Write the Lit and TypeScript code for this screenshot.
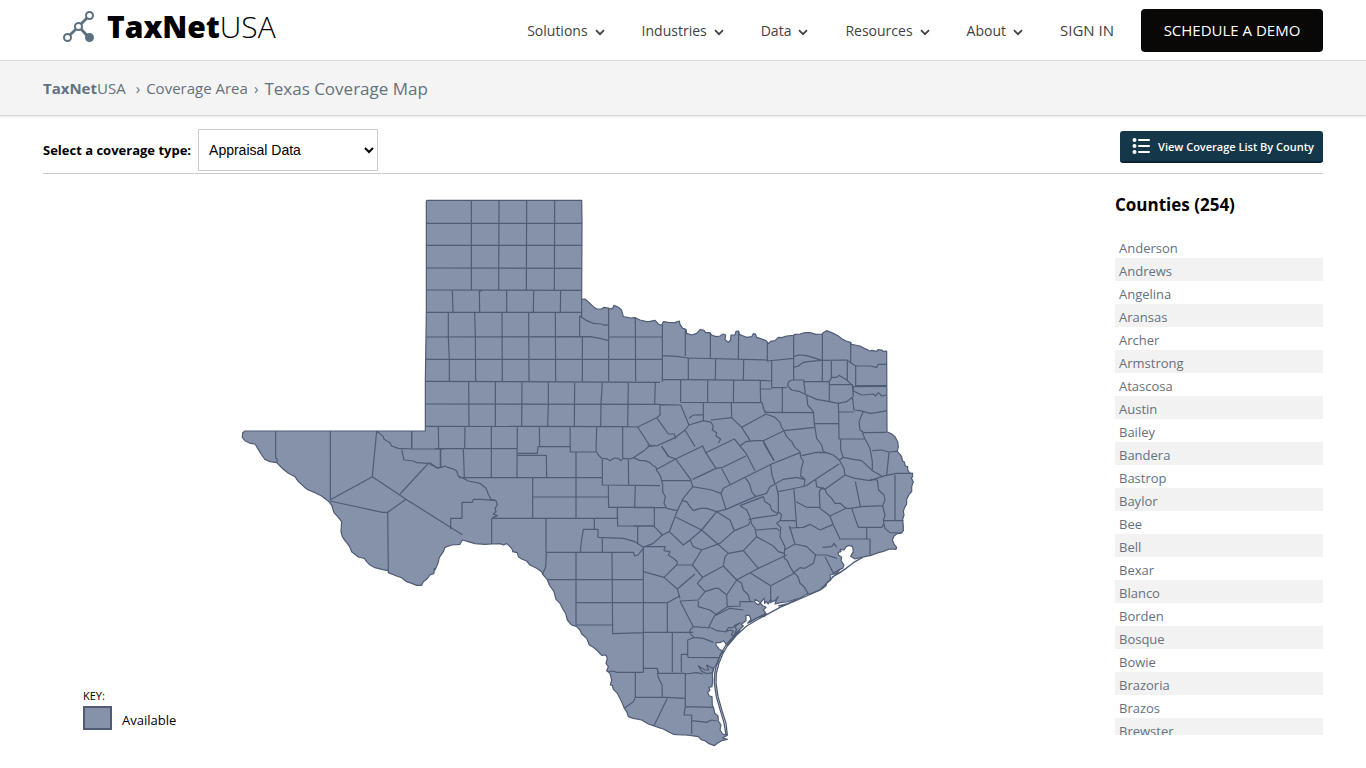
import { LitElement, html, css, svg } from "lit";
import { customElement } from "lit/decorators.js";

/* Each sheet of the map holds polylines in its own local coordinates, separated by "|". */
type Sheet = { dx: number; dy: number; lines: string };

const place = (dx: number, dy: number, points: string): string =>
  points
    .trim()
    .split(/\s+/)
    .map((p) => {
      const [x, y] = p.split(",").map(Number);
      return `${x + dx} ${y + dy}`;
    })
    .join("L");

const toPath = (s: Sheet): string =>
  s.lines
    .split("|")
    .map((l) => "M" + place(s.dx, s.dy, l))
    .join("");

const OUTLINE =
  "M" +
  [
    place(510, -18, "49,33 52,31 515,31 516,97 515,328 525,327 540,340 550,350 560,357 575,357 582,352 595,354 603,357 609,353 612,346 624,351 634,359 640,380 662,384 676,383 690,390 710,395 720,394 735,391 745,402 750,405"),
    place(1200, 282, "66,104 70,95 85,97 105,98 112,95 118,93 120,103 128,115 138,118 140,130 155,135 170,130 180,119 192,121 197,128 210,128 215,135 228,140 240,138 250,132 257,135 255,148 265,157 272,150 273,135 285,135 288,124 296,123 298,133 310,138 320,142 335,140 340,131 346,132 350,142 362,146 378,152 386,161 392,154 405,152 415,142 425,143 440,138 461,136 465,133 480,132 495,128 510,128 528,133 546,132 550,128 560,122 580,130 595,138 605,146 618,153 632,157 634,163 645,165 660,168 675,176 690,183 696,181 710,184 714,179 725,180 730,184 740,183 741,425 755,432 765,440 773,455 775,470 772,484 780,493 785,500 787,512 793,516 796,528 803,530 803,540 810,550 818,550"),
    place(1200, 732, "817,100 818,110 814,114 820,125 815,140 815,155 808,162 800,178 800,192 793,205 790,215 792,225 788,238 790,260 790,272 785,279 770,282 762,288 757,300 762,312 770,322 768,328 757,327 745,328 730,334 715,338 693,346 664,352 645,357 632,349 640,335 638,320 628,316 618,320 612,330 600,328 603,335 594,337 596,346 605,352 603,362 612,375 608,385 600,388 590,400 570,405 572,420 560,428 558,437 545,447 535,452 515,460 500,463 480,474 460,480 440,486 425,487 405,492 410,478 415,470 405,482 395,486 392,478 385,492 378,484 374,490 372,474 362,488 345,478 344,486 352,494 362,490 368,497 378,502 370,510 376,517 372,530"),
    place(1200, 1182, "376,76 355,82 335,94 325,97 333,88 328,76 318,76 318,92 304,103 310,108 290,128 283,138 274,135 280,124 272,120 258,124 266,113 277,113 285,106 300,98 284,110 290,118 276,150 268,158 262,166 250,152 240,158 228,158 228,165 238,178 252,185 243,193 238,205 232,222 220,235 218,248 200,251 185,244 175,228 195,240 206,240 200,225 212,232 222,235 217,252 218,270 216,290 206,292 210,300 203,308 208,318 216,320 217,345 222,358 224,370 234,378 235,393 243,405 240,420 248,432 262,436 248,444 262,448 245,452 232,460 223,467 205,460 195,452 185,450 175,440 150,436 135,435"),
    place(870, 1002, "455,615 430,613 415,605 400,597 385,592 370,587 355,582 335,570 310,565 295,560 290,545 283,535 275,515 262,490 250,478 247,466 241,465 245,450 240,430 230,422 235,410 228,400 232,385 227,375 215,376 200,360 190,352 178,345 170,325 155,312 150,300 140,290 125,285 112,270 107,250 100,240 90,220 78,208 72,185 58,165 52,149 38,133 35,125 20,115 0,105"),
    place(510, 522, "350,573 335,567 325,560 322,548 308,545 308,540 300,530 290,521 280,525 270,521 245,522 225,523 195,521 175,515 157,510 150,523 125,525 105,532 100,545 88,562 84,580 75,600"),
    place(-30, 672, "613,445 612,460 600,465 590,478 580,485 575,496 560,496 545,490 530,485 515,473 500,468 475,458 475,452 455,448 435,443 420,435 410,425 403,415 385,411 365,395 358,378 345,362 337,350 333,335 335,305 325,292 312,278 305,255 295,243 290,240 275,228 255,218 235,210 225,203 205,185 195,170 175,160 160,148 150,138 140,128 120,125 105,118 95,105 85,88 75,72 60,70 45,62 37,52 38,38 45,33 585,33"),
    place(510, 522, "46,182 46,34"),
    place(510, -18, "46,574 49,367"),
  ].join("L") +
  "Z";

const SHEETS: Sheet[] = [
  {
    dx: 510,
    dy: -18,
    lines:
      "49,100 515,100|49,166 515,166|49,234 515,235|49,300 515,301|49,367 515,367|49,441 540,440 570,445 595,452|596,441 757,441|47,508 757,508|184,31 184,300|267,31 266,300|350,31 349,300|434,31 433,300|127,301 129,367|215,302 208,304 209,367|290,301 290,367|371,301 370,367|452,301 451,367|115,367 115,441 118,508 118,574|194,367 196,441 197,574|276,367 277,574|356,367 357,574|436,367 437,574|515,328 515,380 509,378 509,441|517,441 517,574|509,378 530,392 550,400 575,402 582,406 595,404|596,355 596,574|676,383 677,574",
  },
  {
    dx: 1200,
    dy: 282,
    lines:
      "67,104 67,276|136,118 136,198|67,197 110,199 145,204 382,210 382,213 461,205|211,130 211,204|296,124 295,207|382,156 382,213|145,204 145,270|227,206 226,270|311,208 310,271|67,268 361,271 395,273|395,213 395,293|361,271 361,297 395,297|395,293 440,293|461,136 461,270|547,132 547,210|632,157 632,218|461,200 475,195 500,197 520,203 545,211|461,232 475,228 490,217 510,214 545,211 620,210 647,228 690,228 710,232 715,223 740,223|547,211 547,273|574,211 574,262|622,214 622,272|445,275 455,270 491,270 493,275 568,274|647,228 647,287 740,287|568,274 575,262 590,262 597,256 620,270 637,286|568,284 637,284 640,320|568,274 568,333|491,272 496,310|445,275 443,288 455,300 480,305 500,315 530,328 568,335 595,340 620,335 637,322|637,290 740,289|640,290 640,303 665,315 700,312 707,318 715,308 725,318 740,315|637,320 642,360 660,362 690,370 710,368 740,362|595,340 596,366 642,366|670,364 657,395 660,420 672,428 740,427|596,366 597,447 673,447|667,428 675,447 690,475 697,515 697,540|697,482 725,480 745,486 772,484|747,488 740,555|427,292 427,366|361,297 362,335 368,342 370,355 378,368|373,367 523,368|500,315 503,345 520,365 523,400 530,445 545,465 550,485|523,401 596,401|122,270 122,337|203,272 203,337|281,272 280,337|46,276 44,342|60,344 122,345|122,337 361,338|60,344 60,375 50,383 -7,411|50,383 85,432 103,432 107,447|122,345 147,405|147,385 160,375 190,374|147,405 190,392 190,338|190,392 215,397|213,390 275,383|274,338 275,383 305,412 330,451|305,412 378,372|378,372 405,382 420,397 425,412 432,422 370,452 402,512|22,465 50,468 107,442 135,420 147,405|65,468 85,500|135,420 165,470|213,397 220,408 217,420 230,428 228,438 242,447 235,460|432,422 525,412|432,422 440,440 455,455 465,472 480,485|300,468 317,455 345,452 370,452",
  },
  {
    dx: 510,
    dy: 522,
    lines:
      "46,34 750,37|46,102 750,103|46,169 640,170 683,171|176,34 177,169|256,36 256,169|336,36 335,169|415,36 415,103 413,169|494,37 493,169|577,37 573,103 572,169|655,37 653,169|653,103 734,103|5,183 5,235|85,169 86,235|165,169 164,235|244,169 244,323|322,169 321,323|388,169 389,230 384,230 382,250 322,250|389,230 480,229|480,169 481,246 560,246|560,170 558,246|638,170 638,265|75,236 321,236|322,256 409,256 410,323|160,237 163,323|92,237 92,292|147,323 577,323|368,323 368,445|498,246 498,445|368,381 595,381|577,265 577,345 750,347|655,265 656,347|595,346 596,412 732,412|676,348 674,412|622,412 623,468 732,468|245,445 622,445 622,412|408,445 408,547|553,445 553,477|511,543 514,515 520,478 564,478 564,502 640,505 675,515 700,532|577,502 577,547 |511,543 515,547|408,547 670,547 674,558 684,555 700,535|683,468 683,520|560,246 565,255 575,265 590,266 600,272 612,264 625,265 632,272 640,265 660,267 670,263 690,272|683,171 718,225|735,226 715,230 705,240 670,263|60,278 80,293 95,292 105,288 115,293 130,297 140,303 145,318 160,325 175,333 210,340 228,355 236,375 243,388|243,388 258,392 262,405 255,415 258,425 250,432 262,437 248,443|258,392 215,388 190,388 187,397 156,397 156,445 122,445 122,478|245,445 245,522",
  },
  {
    dx: 1200,
    dy: 732,
    lines:
      "0,62 15,62 30,68 38,76 48,82 50,92 55,98 62,110 68,135 68,155 76,170 72,190 80,205|65,122 152,122|65,20 87,50 107,57|50,88 107,57 188,18 197,38 228,85 158,118|107,57 152,118 158,140|197,38 283,-3 318,40 345,92|228,85 245,83 318,48|245,86 270,132|480,38 395,72 315,112 250,145 243,160|370,8 402,62|480,35 482,50 490,65 484,85 482,108 495,118 492,138|485,47 530,37 560,38 580,45 598,60|550,35 580,45|598,60 610,52 602,30 602,-2|610,52 640,58 665,62 697,92 725,108|598,60 612,85 615,105|597,72 527,118 497,138|158,140 215,150 243,160 258,208|158,140 130,175 112,212|315,112 328,130 335,155 347,170 258,208 230,215|347,170 380,160 390,140 405,132|392,75 396,105 405,132 430,118 470,112 492,118|527,118 530,140 555,148|555,148 615,105 645,115 690,122 735,107|646,125 662,203|690,118 712,120 716,150 732,165 735,180 728,198 735,225 730,242|662,200 730,197|735,107 770,100 818,100|765,105 765,240 |730,242 790,242|730,242 735,265 750,278 785,279|413,155 440,150 497,138|408,135 415,165 415,215 425,225 420,242|462,148 470,262|468,185 500,202 538,202|545,145 538,155 540,205 570,228 618,205|545,142 555,148 560,160 575,175 585,190 600,190 618,205|618,205 635,205 662,200|570,228 580,255 600,297|635,205 655,262 710,262 725,262 733,250|680,262 680,297|597,297 690,297 690,345|420,242 468,242|448,258 452,264 490,262 510,253 540,270 580,253|448,258 465,312 433,330|465,312 500,320 527,345|527,345 560,345 590,355|548,322 575,320 582,310 590,322|555,350 580,400 600,388|527,345 520,370 495,385 480,383 462,397|462,397 475,412 480,430 492,440 505,462|433,340 433,355 442,362 450,380 462,400 392,437 392,490|433,340 415,335 400,318 350,290|330,232 335,252 345,265 350,290 310,332|347,270 410,265 418,272|415,215 410,225 340,235 325,240|300,197 320,210 330,232|300,197 370,170|370,170 375,185 390,195 395,210 415,222|420,242 410,250 422,262 420,290 435,320 433,340|330,245 325,255 283,272|283,272 270,240 230,215|230,215 185,270 240,318|125,182 140,185 150,200 160,212 180,205 200,205 230,215|112,212 88,275 130,315 150,300 185,270|105,230 185,270|80,205 112,212|43,205 43,260 67,285 88,275|-18,203 80,203|-18,258 43,258|67,285 40,310 10,322|150,300 160,320 185,330 157,375 110,375 112,365 100,355 85,345 90,335 72,332 75,320 10,320|283,272 240,310 185,330|240,318 265,340 310,332|157,375 188,412|188,412 250,378|250,378 255,350 265,340|110,375 72,412 10,395|72,412 112,447 120,475|112,447 165,402|188,412 172,430 195,455|250,378 290,420|290,420 355,385 310,332|330,398 392,437|290,420 305,430 310,450 325,465 330,485|355,385 440,345|195,455 225,445 235,445 260,465 290,420|195,455 175,480 120,483|260,465 262,500 225,525|262,500 300,498 300,485 340,485",
  },
  {
    dx: -30,
    dy: 672,
    lines:
      "137,33 137,115 142,118 140,128|301,33 301,240|440,33 427,170 300,240|427,170 528,238 697,344|510,222 595,130|300,243 457,277 473,277 528,238|473,277 475,452|440,33 460,50 462,58 480,68 485,78 505,85 545,87 640,87|545,33 545,85|515,88 522,120 550,123 560,128 595,130 600,129|631,88 631,140|595,130 625,145 635,138",
  },
  {
    dx: 870,
    dy: 1002,
    lines:
      "49,67 47,110 38,133|138,67 138,285|52,149 340,149|246,67 248,311 340,308|138,217 412,218|138,285 247,285|340,52 340,427|412,218 412,307|412,218 450,197|340,307 490,307|450,213 490,290|490,290 480,300 480,310 492,322 520,325 550,337|490,290 545,294 560,302 590,306|427,307 427,427|565,383 475,382 470,373 454,373 454,427|492,322 473,330 473,375|235,425 250,423 260,427 340,427|340,415 382,415 385,430 466,430|382,415 384,440 396,465 397,502|316,427 316,502 310,515 283,535|316,502 412,502 466,505|412,505 373,585|466,430 466,530 462,555 485,555 485,612|466,530 550,532|485,572 530,577 545,570 560,573|466,432 500,428 520,432|535,294 553,258 600,235 640,240|505,213 505,230 540,240 560,255",
  },
];

const COAST: Sheet = {
  dx: 1200,
  dy: 732,
  lines:
    "668,352 640,368 615,388 585,405 570,420 540,450 500,468 460,485 420,502 376,526 350,540 320,558 290,585 262,618 248,642 236,672 229,700 228,730 234,770 246,812 258,850 262,885|630,376 600,398 575,412|470,478 440,492 415,498|380,520 350,534 322,550|300,570 280,590 260,612 243,640 230,672 224,700 223,730 229,770 240,808 252,848 258,885",
};

const COUNTIES = [
  "Anderson", "Andrews", "Angelina", "Aransas", "Archer", "Armstrong", "Atascosa", "Austin",
  "Bailey", "Bandera", "Bastrop", "Baylor", "Bee", "Bell", "Bexar", "Blanco", "Borden",
  "Bosque", "Bowie", "Brazoria", "Brazos", "Brewster",
];

@customElement("app-root")
export class AppRoot extends LitElement {
  static styles = css`
    :host {
      display: block;
      font-family: "Open Sans", "Noto Sans", sans-serif;
      font-size: 14px;
      color: #000;
      background: #fff;
    }
    * { box-sizing: border-box; }
    a { color: inherit; text-decoration: none; }
    header {
      display: flex;
      align-items: center;
      justify-content: space-between;
      height: 60px;
      padding: 0 43px 0 63px;
    }
    .logo { display: flex; align-items: center; gap: 13px; font-size: 30px; line-height: 40px; padding-bottom: 6px; }
    .logo-name { font-weight: 300; }
    .logo-name b { font-weight: 800; }
    nav { display: flex; align-items: center; gap: 37px; font-size: 14px; color: #3f4245; }
    .item {
      display: flex;
      align-items: center;
      gap: 7px;
      padding: 0;
      border: 0;
      background: none;
      font: inherit;
      color: inherit;
    }
    .item svg { margin-top: 4px; }
    .actions { display: flex; align-items: center; gap: 27px; font-size: 15px; }
    .demo {
      display: flex;
      align-items: center;
      justify-content: center;
      width: 182px;
      height: 43px;
      border-radius: 4px;
      background: #0a0806;
      color: #fff;
    }
    .crumbs {
      display: flex;
      align-items: center;
      gap: 6px;
      height: 56px;
      padding: 0 43px;
      border-top: 1px solid #d8d8d8;
      border-bottom: 1px solid #d8d8d8;
      background: #f4f4f4;
      box-shadow: 0 1px 2px #0000001a;
      color: #64717e;
      font-size: 15px;
    }
    .home { margin-right: 4px; }
    h1 { margin: 0; font-size: 17px; font-weight: 400; }
    main { padding: 13px 43px 0; }
    .toolbar {
      display: flex;
      align-items: center;
      justify-content: space-between;
      height: 45px;
      padding-bottom: 2px;
      border-bottom: 1px solid #ccc;
    }
    .picker { display: flex; align-items: center; gap: 7px; }
    .picker label { font-size: 13px; font-weight: 700; }
    select {
      width: 180px;
      height: 42px;
      padding: 0 6px;
      border: 1px solid #ccc;
      background: #fff;
      color: #000;
      font: 14px "Liberation Sans", sans-serif;
    }
    .list-button {
      display: flex;
      align-items: center;
      justify-content: space-between;
      width: 203px;
      height: 32px;
      margin-bottom: 6px;
      padding: 0 9px 0 12px;
      border: 0;
      border-bottom: 2px solid #0b2330;
      border-radius: 3px;
      background: #14384a;
      color: #fff;
      font: 600 11px "Open Sans", sans-serif;
    }
    .content { display: grid; grid-template-columns: 1fr 208px; }
    .map { position: relative; padding: 22px 195px 0 197px; }
    .map > svg { display: block; width: 100%; max-width: 680px; }
    .shape { fill: #8692aa; }
    .shape, .lines, .coast { stroke: #4f5c76; stroke-width: 3.6; stroke-linejoin: round; }
    .lines, .coast { fill: none; }
    .coast { stroke-width: 4; }
    .key { position: absolute; left: 40px; bottom: 20px; }
    .key-title { font-size: 11px; line-height: 16px; }
    .key-row { display: flex; align-items: center; gap: 10px; margin-top: 2px; font-size: 13px; }
    .key-row span:last-child { padding-top: 4px; }
    .swatch { width: 29px; height: 24px; border: 2px solid #4f5c76; background: #8692aa; }
    h2 { margin: 0; padding: 19px 0 18px; font-size: 17px; line-height: 24px; font-weight: 700; }
    ul { height: 500px; margin: 0; padding: 0; overflow: hidden; list-style: none; }
    li { height: 23px; padding: 2px 4px 0; line-height: 22px; font-size: 13px; color: #65717e; }
    li:nth-child(even) { background: #f2f2f2; }
  `;

  private menu(name: string) {
    return html`<button class="item">
      ${name}
      <svg width="10" height="7" viewBox="0 0 10 7" aria-hidden="true">
        <path d="M1 1.2 5 5.2 9 1.2" fill="none" stroke="#3f4245" stroke-width="1.8" />
      </svg>
    </button>`;
  }

  render() {
    return html`
      <header>
        <a class="logo" href="#">
          <svg width="31" height="32" viewBox="0 0 31 32" aria-hidden="true">
            <g fill="none" stroke="#5b7080" stroke-width="2">
              <path d="M7 24 13 18M18 13 24 7" stroke-width="2.8" />
              <path d="M18 18 24 24.500" stroke-width="2.8" />
              <circle cx="4.500" cy="26.500" r="3.500" />
              <circle cx="15.500" cy="15.500" r="3.500" />
              <circle cx="26.500" cy="4.500" r="3.500" />
              <circle cx="26.500" cy="26.500" r="3.500" fill="#5b7080" />
            </g>
          </svg>
          <span class="logo-name"><b>TaxNet</b>USA</span>
        </a>
        <nav>
          ${["Solutions", "Industries", "Data", "Resources", "About"].map((n) => this.menu(n))}
          <div class="actions">
            <a href="#">SIGN IN</a>
            <a class="demo" href="#">SCHEDULE A DEMO</a>
          </div>
        </nav>
      </header>
      <div class="crumbs">
        <a class="home" href="#"><b>TaxNet</b>USA</a>
        <span>›</span>
        <a href="#">Coverage Area</a>
        <span>›</span>
        <h1>Texas Coverage Map</h1>
      </div>
      <main>
        <div class="toolbar">
          <div class="picker">
            <label for="coverage">Select a coverage type:</label>
            <select id="coverage"><option>Appraisal Data</option></select>
          </div>
          <button class="list-button">
            <svg width="18" height="16" viewBox="0 0 18 16" aria-hidden="true">
              <g fill="#fff">
                <circle cx="2.500" cy="2" r="2" /><circle cx="2.500" cy="8" r="2" /><circle cx="2.500" cy="14" r="2" />
              </g>
              <path d="M7 2H17M7 8H17M7 14H17" stroke="#fff" stroke-width="2" stroke-linecap="round" />
            </svg>
            View Coverage List By County
          </button>
        </div>
        <div class="content">
          <section class="map">
            <svg viewBox="0 0 2040 1662" role="img" aria-label="Texas counties">
              <path class="shape" d=${OUTLINE} />
              ${SHEETS.map((s) => svg`<path class="lines" d=${toPath(s)} />`)}
              <path class="coast" d=${toPath(COAST)} />
            </svg>
            <div class="key">
              <div class="key-title">KEY:</div>
              <div class="key-row"><span class="swatch"></span><span>Available</span></div>
            </div>
          </section>
          <aside>
            <h2>Counties (254)</h2>
            <ul>
              ${COUNTIES.map((c) => html`<li><a href="#">${c}</a></li>`)}
            </ul>
          </aside>
        </div>
      </main>
    `;
  }
}
